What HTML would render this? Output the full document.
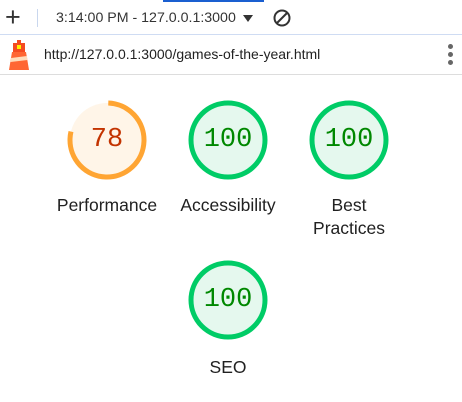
<!DOCTYPE html><html><head><style>
body{margin:0;width:462px;height:402px;background:#fff;font-family:"Liberation Sans",sans-serif;position:relative;overflow:hidden}
.a{position:absolute}
.g{position:absolute;width:84px;height:84px}
.n{position:absolute;width:84px;top:0;line-height:84px;text-align:center;font-family:"Liberation Mono",monospace;font-size:27px}
.l{position:absolute;width:130px;text-align:center;font-size:17.5px;color:#212121;line-height:23px}
</style></head><body>
<div class="a" style="left:163px;top:0;width:101px;height:2px;background:#1a5fd0"></div>
<div class="a" style="left:5px;top:6px;font-size:27px;line-height:22px;color:#333">+</div>
<div class="a" style="left:37px;top:9px;width:1px;height:18px;background:#c9d7ee"></div>
<div class="a" style="left:56px;top:10px;font-size:14.2px;color:#333">3:14:00 PM - 127.0.0.1:3000</div>
<div class="a" style="left:243px;top:15px;width:0;height:0;border-left:5px solid transparent;border-right:5px solid transparent;border-top:7px solid #333"></div>
<svg class="a" style="left:272px;top:8px" width="20" height="20"><circle cx="10" cy="10" r="7.5" fill="none" stroke="#333" stroke-width="2"/><line x1="5" y1="15" x2="15" y2="5" stroke="#333" stroke-width="2"/></svg>
<div class="a" style="left:0;top:34px;width:462px;height:1px;background:#cfdcf3"></div>
<svg class="a" style="left:8px;top:40px" width="22" height="32"><rect x="9" y="0" width="4" height="3" fill="#f44b21"/><rect x="5" y="3" width="12" height="9" fill="#f44b21"/><rect x="9" y="5" width="4" height="4" fill="#fff200"/><polygon points="4,12 18,12 21,30 1,30" fill="#f63"/><polygon points="3,18 19,16 19.5,20 2.5,22" fill="#fdb"/></svg>
<div class="a" style="left:44px;top:46px;font-size:14px;color:#222">http://127.0.0.1:3000/games-of-the-year.html</div>
<div class="a" style="left:448px;top:44px;width:5px;height:5px;border-radius:50%;background:#666;box-shadow:0 8px 0 #666,0 16px 0 #666"></div>
<div class="a" style="left:0;top:74px;width:462px;height:1px;background:#ddd"></div>

<svg class="g" style="left:65px;top:98px" viewBox="0 0 84 84"><circle cx="42" cy="42" r="37" fill="#fff5e8" stroke="none"/><circle cx="42" cy="42" r="37" fill="none" stroke="#ffa533" stroke-width="5" stroke-dasharray="181.3 300" transform="rotate(-88 42 42)"/></svg>
<div class="n" style="left:65px;top:98px;color:#c33300">78</div>
<svg class="g" style="left:186px;top:98px" viewBox="0 0 84 84"><circle cx="42" cy="42" r="37" fill="#e5f8ee" stroke="#0c6" stroke-width="5"/></svg>
<div class="n" style="left:186px;top:98px;color:#080">100</div>
<svg class="g" style="left:307px;top:98px" viewBox="0 0 84 84"><circle cx="42" cy="42" r="37" fill="#e5f8ee" stroke="#0c6" stroke-width="5"/></svg>
<div class="n" style="left:307px;top:98px;color:#080">100</div>
<svg class="g" style="left:186px;top:258px" viewBox="0 0 84 84"><circle cx="42" cy="42" r="37" fill="#e5f8ee" stroke="#0c6" stroke-width="5"/></svg>
<div class="n" style="left:186px;top:258px;color:#080">100</div>

<div class="l" style="left:42px;top:194px">Performance</div>
<div class="l" style="left:163px;top:194px">Accessibility</div>
<div class="l" style="left:284px;top:194px">Best<br>Practices</div>
<div class="l" style="left:163px;top:356px">SEO</div>
</body></html>
